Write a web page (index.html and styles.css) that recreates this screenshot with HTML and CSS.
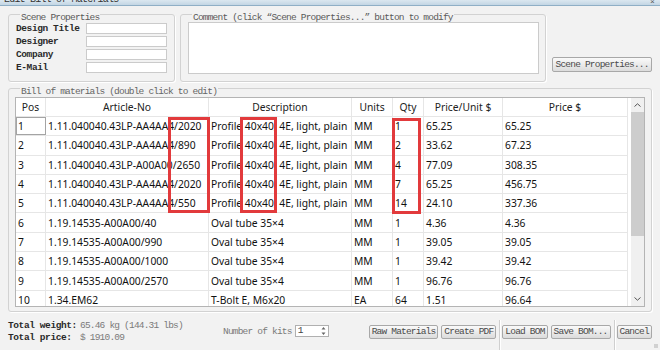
FILE: index.html
```html
<!DOCTYPE html>
<html lang="en">
<head>
    <meta charset="UTF-8">
    <title>Edit Bill of Materials</title>
    <link rel="stylesheet" href="styles.css">
</head>
<body>
    <div class="titlebar">
        <span class="title-text">Edit Bill of Materials</span>
        <span class="close">&times;</span>
    </div>
    <div class="dialog">
        <div class="top-row">
            <div class="group scene-group">
                <div class="group-title">Scene Properties</div>
                <div class="scene-form">
                    <label>Design Title</label><span class="field"></span>
                    <label>Designer</label><span class="field"></span>
                    <label>Company</label><span class="field"></span>
                    <label>E-Mail</label><span class="field"></span>
                </div>
            </div>
            <div class="group comment-group">
                <div class="group-title">Comment (click “Scene Properties...” button to modify</div>
                <div class="comment-box"></div>
            </div>
            <button class="btn scene-btn">Scene Properties...</button>
        </div>

        <div class="group bom-group">
            <div class="group-title">Bill of materials (double click to edit)</div>
            <div class="bom-table">
                <div class="bom-grid">
                    <div class="bom-row bom-head">
                        <span>Pos</span><span>Article-No</span><span>Description</span><span>Units</span><span>Qty</span><span>Price/Unit $</span><span>Price $</span>
                    </div>
                    <div class="bom-row">
                        <span class="focus">1</span><span>1.11.040040.43LP-AA4AA4/2020</span><span>Profile 40x40, 4E, light, plain</span><span>MM</span><span>1</span><span>65.25</span><span>65.25</span>
                    </div>
                    <div class="bom-row">
                        <span>2</span><span>1.11.040040.43LP-AA4AA4/890</span><span>Profile 40x40, 4E, light, plain</span><span>MM</span><span>2</span><span>33.62</span><span>67.23</span>
                    </div>
                    <div class="bom-row">
                        <span>3</span><span>1.11.040040.43LP-A00A00/2650</span><span>Profile 40x40, 4E, light, plain</span><span>MM</span><span>4</span><span>77.09</span><span>308.35</span>
                    </div>
                    <div class="bom-row">
                        <span>4</span><span>1.11.040040.43LP-AA4AA4/2020</span><span>Profile 40x40, 4E, light, plain</span><span>MM</span><span>7</span><span>65.25</span><span>456.75</span>
                    </div>
                    <div class="bom-row">
                        <span>5</span><span>1.11.040040.43LP-AA4AA4/550</span><span>Profile 40x40, 4E, light, plain</span><span>MM</span><span>14</span><span>24.10</span><span>337.36</span>
                    </div>
                    <div class="bom-row">
                        <span>6</span><span>1.19.14535-A00A00/40</span><span>Oval tube 35×4</span><span>MM</span><span>1</span><span>4.36</span><span>4.36</span>
                    </div>
                    <div class="bom-row">
                        <span>7</span><span>1.19.14535-A00A00/990</span><span>Oval tube 35×4</span><span>MM</span><span>1</span><span>39.05</span><span>39.05</span>
                    </div>
                    <div class="bom-row">
                        <span>8</span><span>1.19.14535-A00A00/1000</span><span>Oval tube 35×4</span><span>MM</span><span>1</span><span>39.42</span><span>39.42</span>
                    </div>
                    <div class="bom-row">
                        <span>9</span><span>1.19.14535-A00A00/2570</span><span>Oval tube 35×4</span><span>MM</span><span>1</span><span>96.76</span><span>96.76</span>
                    </div>
                    <div class="bom-row">
                        <span>10</span><span>1.34.EM62</span><span>T-Bolt E, M6x20</span><span>EA</span><span>64</span><span>1.51</span><span>96.64</span>
                    </div>
                </div>
                <div class="scrollbar">
                    <div class="sb-arrow">
                        <svg width="7" height="4" viewBox="0 0 7 4"><polyline points="0.5,3.5 3.5,0.8 6.5,3.5" fill="none" stroke="#555" stroke-width="1"/></svg>
                    </div>
                    <div class="sb-thumb"></div>
                    <div class="sb-track"></div>
                    <div class="sb-arrow">
                        <svg width="7" height="4" viewBox="0 0 7 4"><polyline points="0.5,0.5 3.5,3.2 6.5,0.5" fill="none" stroke="#555" stroke-width="1"/></svg>
                    </div>
                </div>
                <div class="mark mark-article"></div>
                <div class="mark mark-desc"></div>
                <div class="mark mark-qty"></div>
            </div>
        </div>

        <div class="bottom-bar">
            <div class="totals">
                <b>Total weight:</b><span>65.46 kg (144.31 lbs)</span>
                <b>Total price:</b><span>$ 1910.09</span>
            </div>
            <span class="kits-label">Number of kits</span>
            <div class="spinbox">
                <span>1</span>
                <span class="spin-arrows">
                    <svg width="5" height="10" viewBox="0 0 5 10"><path d="M2.5 1 L4.5 3.5 L0.5 3.5 Z M2.5 9 L4.5 6.5 L0.5 6.5 Z" fill="#666"/></svg>
                </span>
            </div>
            <button class="btn first-btn">Raw Materials</button>
            <button class="btn">Create PDF</button>
            <span class="sep"></span>
            <button class="btn">Load BOM</button>
            <button class="btn">Save BOM...</button>
            <span class="sep"></span>
            <button class="btn">Cancel</button>
        </div>
    </div>
    <div class="grip"></div>
</body>
</html>
```

FILE: styles.css
```css
body {
    margin: 0;
    width: 660px;
    height: 350px;
    overflow: hidden;
    background-color: #f2f2f2;
    font-family: "Liberation Mono", monospace;
    font-size: 9.5px;
    letter-spacing: -0.8px;
    color: #555;
    position: relative;
}
.titlebar {
    height: 5px;
    border-bottom: 1px solid #8fafc6;
    background: linear-gradient(#dbe7f0, #c3d6e4);
    overflow: hidden;
    display: flex;
    justify-content: space-between;
    padding: 0 6px 0 4px;
}
.title-text {
    font-size: 10px;
    letter-spacing: -0.8px;
    line-height: 12px;
    margin-top: -6px;
    color: #333;
}
.close {
    font-size: 8px;
    line-height: 8px;
    margin-top: -2px;
    color: #555;
}
.dialog {
    padding: 8px 8px 0 8px;
}
.top-row {
    display: flex;
    height: 68px;
}
.group {
    border: 1px solid #d2d2d2;
    border-radius: 3px;
    box-sizing: border-box;
    box-shadow: 1px 1px 0 #fff;
}
.group-title {
    width: fit-content;
    margin: -2px 0 0 5px;
    padding: 0 1px;
    line-height: 9px;
    background-color: #f2f2f2;
    color: #5a5a5a;
}
.scene-group {
    width: 167px;
    padding: 0 7px 0 6px;
}
.scene-form {
    display: grid;
    grid-template-columns: 70px 81px;
    grid-auto-rows: 11px;
    row-gap: 2px;
    padding-top: 1px;
    margin-left: 1px;
}
.scene-form label {
    font-weight: bold;
    letter-spacing: -0.4px;
    color: #2a2a2a;
    line-height: 11px;
}
.field {
    background-color: #fff;
    border: 1px solid #cbcbcb;
}
.comment-group {
    width: 367px;
    margin-left: 5px;
    padding: 0 6px 0 6px;
}
.comment-box {
    height: 52px;
    margin-left: 1px;
    box-sizing: border-box;
    background-color: #fff;
    border: 1px solid #cbcbcb;
}
.btn {
    font-family: "Liberation Mono", monospace;
    font-size: 9.5px;
    letter-spacing: -0.8px;
    color: #4a4a4a;
    height: 14px;
    padding: 0 2px;
    border: 1px solid #a8a8a8;
    border-radius: 2px;
    background: linear-gradient(#fafafa, #dcdcdc);
    line-height: 12px;
}
.scene-btn {
    align-self: flex-end;
    margin: 0 0 10px 6px;
    height: 15px;
    width: 100px;
}
.bom-group {
    margin-top: 6px;
    height: 224px;
    padding: 0 6px 4px 6px;
}
.bom-group .group-title {
    color: #666;
}
.bom-table {
    position: relative;
    display: flex;
    height: 210px;
    margin-top: 1px;
    box-sizing: border-box;
    border: 1px solid #b4b4b4;
    background-color: #fff;
}
.bom-grid {
    flex: 1;
    overflow: hidden;
    font-family: "Noto Sans", sans-serif;
    font-size: 10.3px;
    letter-spacing: 0;
    color: #111;
}
.bom-row {
    display: grid;
    grid-template-columns: 30px 163px 143px 41px 31px 79px 125px;
    width: 612px;
    height: 19.3px;
    box-sizing: border-box;
    border-bottom: 1px solid #e6e6e6;
}
.bom-row span {
    display: flex;
    align-items: center;
    padding-left: 2px;
    border-right: 1px solid #e6e6e6;
    white-space: nowrap;
    overflow: hidden;
}
.bom-head {
    height: 19px;
}
.bom-head span {
    justify-content: center;
    padding-left: 0;
    color: #222;
}
.bom-row .focus {
    outline: 1px solid #a4a4a4;
    outline-offset: -1px;
}
.scrollbar {
    width: 13px;
    display: flex;
    flex-direction: column;
    background-color: #f0f0f0;
}
.sb-arrow {
    height: 14px;
    display: flex;
    align-items: center;
    justify-content: center;
}
.sb-thumb {
    height: 124px;
    background-color: #cdcdcd;
}
.sb-track {
    flex: 1;
}
.mark {
    position: absolute;
    top: 19px;
    height: 96px;
    box-sizing: border-box;
    border: 3px solid #e23a3c;
}
.mark-article {
    left: 152px;
    width: 42px;
}
.mark-desc {
    left: 224px;
    width: 37px;
}
.mark-qty {
    left: 376px;
    top: 20px;
    width: 29px;
}
.bottom-bar {
    display: flex;
    align-items: center;
    height: 38px;
}
.totals {
    width: 215px;
    margin-top: 2px;
    display: grid;
    grid-template-columns: 70px auto;
    column-gap: 2px;
    line-height: 12px;
    color: #7a7a7a;
}
.totals b {
    color: #2a2a2a;
    letter-spacing: -0.4px;
}
.kits-label {
    color: #7a7a7a;
}
.spinbox {
    display: flex;
    justify-content: space-between;
    width: 34px;
    height: 12px;
    margin-left: 3px;
    box-sizing: border-box;
    border: 1px solid #b0b0b0;
    background-color: #fff;
    line-height: 10px;
    color: #444;
    padding-left: 2px;
}
.spin-arrows {
    display: flex;
    align-items: center;
    padding-right: 2px;
}
.bottom-bar .btn {
    margin-left: 3px;
    margin-top: 2px;
}
.bottom-bar .first-btn {
    margin-left: 40px;
}
.sep {
    align-self: stretch;
    width: 1px;
    margin: 8px 0 0 3px;
    background-color: #cfcfcf;
    box-shadow: 1px 0 0 #fff;
}
.bottom-bar .sep + .btn {
    margin-left: 2px;
}
.grip {
    position: absolute;
    right: 2px;
    bottom: 2px;
    width: 4px;
    height: 4px;
    background: radial-gradient(circle, #aaa 0.6px, transparent 0.8px) 0 0 / 2px 2px;
}
```
